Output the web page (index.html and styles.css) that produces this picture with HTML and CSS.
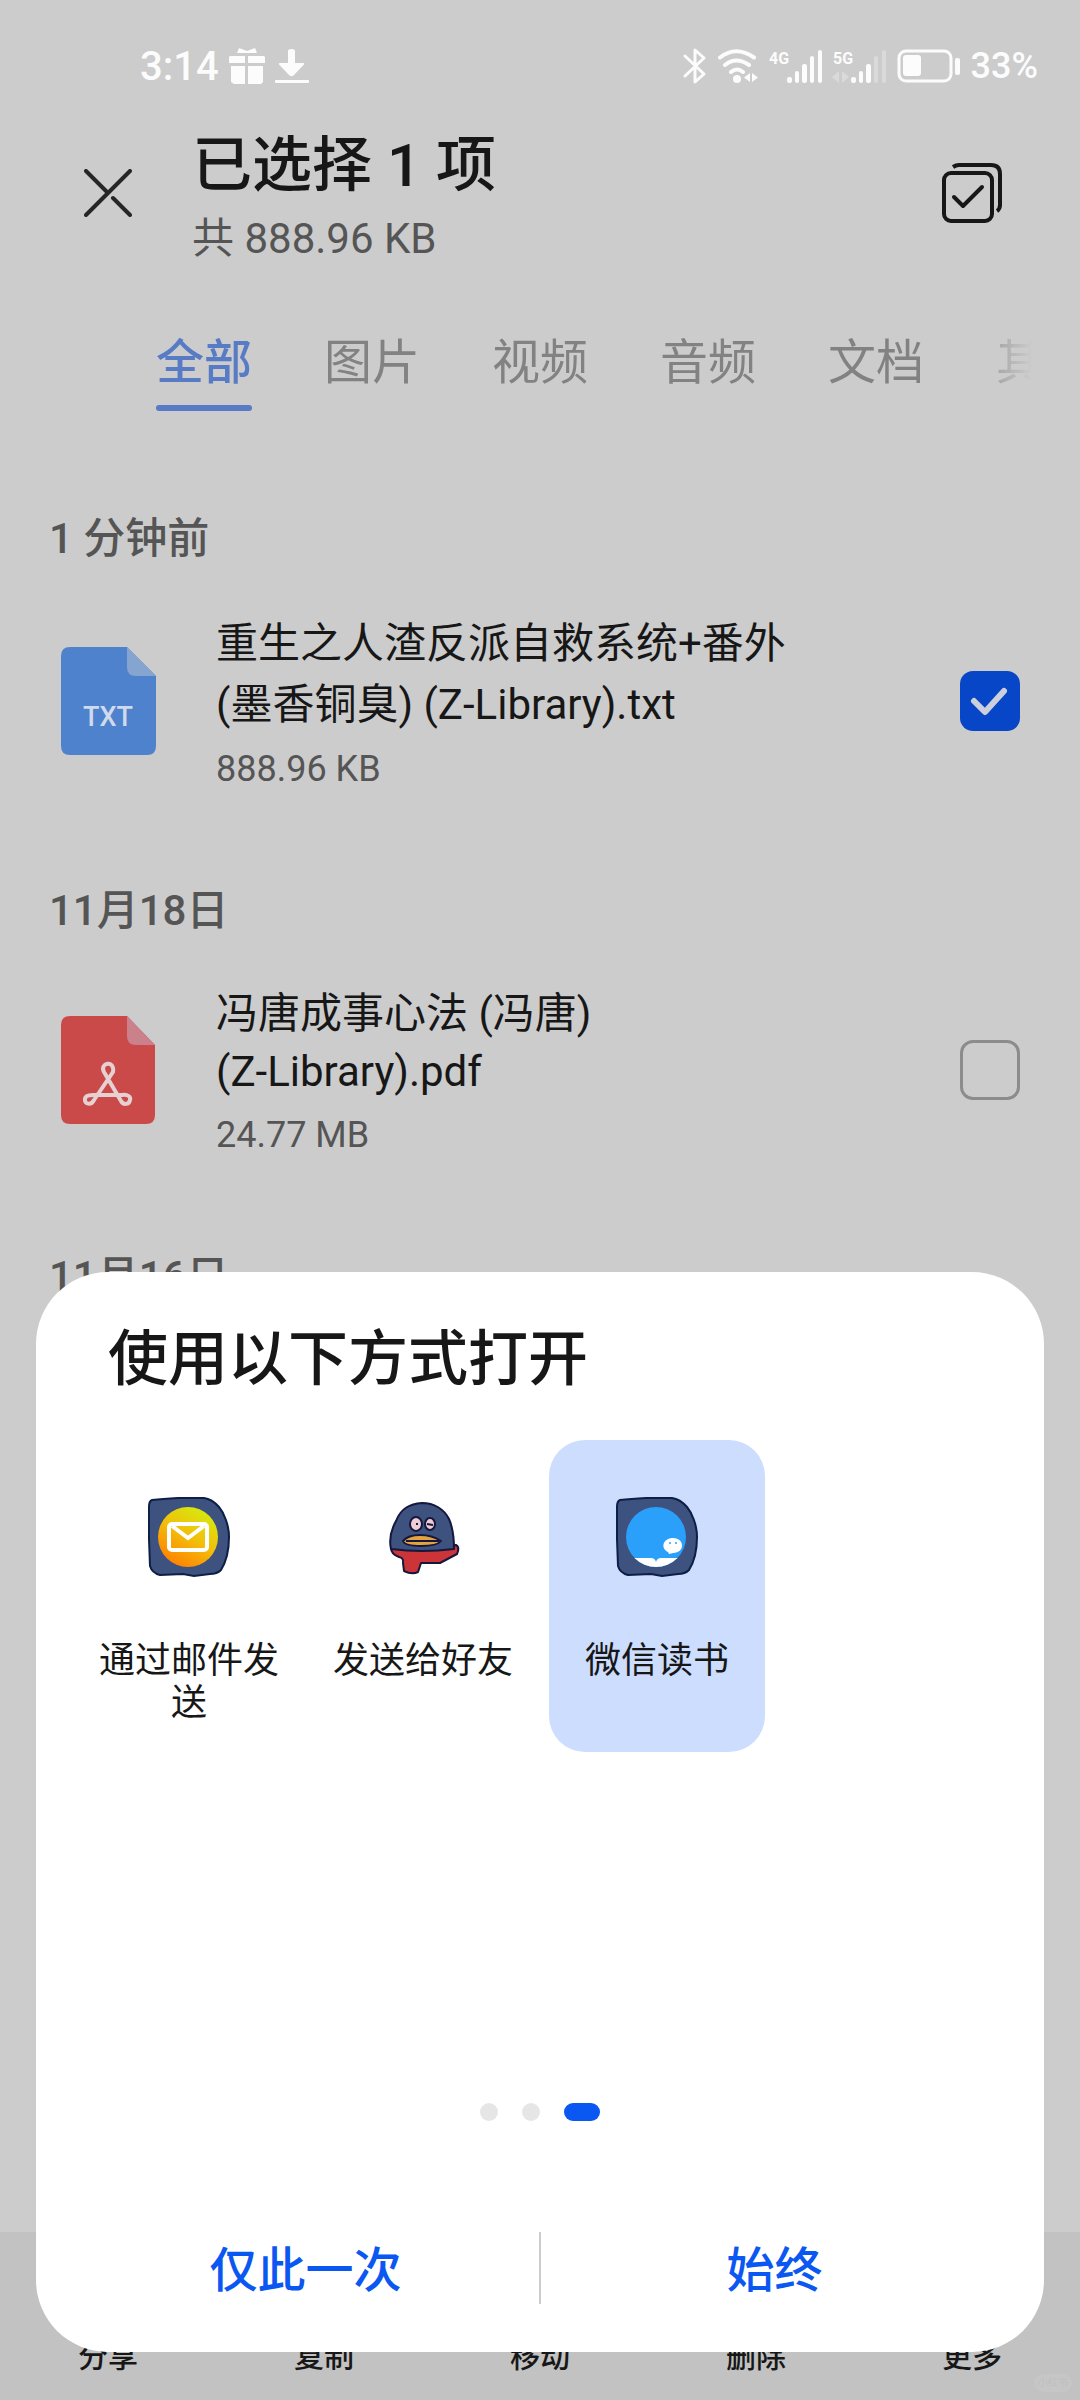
FILE: index.html
```html
<!DOCTYPE html>
<html lang="zh-CN">
  <head>
    <meta charset="UTF-8" />
    <meta name="viewport" content="width=device-width, initial-scale=1.0" />
    <title>文件管理</title>
    <link rel="stylesheet" href="styles.css">
  </head>
  <body>
    <div class="status-bar">
      <div class="status-left">
        <span class="clock">3:14</span>
        <svg class="gift" width="36" height="36" viewBox="0 0 36 36" fill="currentColor">
          <path d="M10 0l8 3 8-3 2 5H8z" />
          <path d="M1 8h15v7H0V9zM19 8h16l1 1v6H19zM2 18h14v18H5l-3-2zM19 18h15v16l-2 2H19z" />
        </svg>
        <svg width="34" height="36" viewBox="0 0 34 36" fill="currentColor">
          <path d="M13 3q0-2 3.500-2t3.500 2v12h8q2 0 .5 2L18.500 27.500q-2 1.500-4 0L4.500 17q-1.500-2 .5-2h8z" />
          <rect x="0" y="32" width="34" height="3" rx="1" />
        </svg>
      </div>

      <div class="status-right">
        <svg width="24" height="36" viewBox="0 0 24 36" fill="none" stroke="currentColor" stroke-width="3" stroke-linejoin="round" stroke-linecap="round">
          <path d="M2 8l19 18-9 8V2l9 8L2 28" />
        </svg>
        <svg width="42" height="36" viewBox="0 0 42 36" fill="none" stroke="currentColor" stroke-width="4" stroke-linecap="round">
          <path d="M3 9.500q16-12.500 34 0M8 17q11-9 24 0M14 24q6-5 12 0" />
          <circle cx="20" cy="31" r="4" fill="currentColor" stroke="none" />
          <path d="M33 25v9l-6-4.500zM35 25v9l6-4.500z" fill="currentColor" stroke="none" />
        </svg>
        <svg class="signal" width="54" height="36" viewBox="0 0 54 36" fill="currentColor">
          <text x="0" y="16">4G</text>
          <rect x="18" y="29" width="5" height="6" rx="2" />
          <rect x="26" y="23" width="4" height="12" rx="2" />
          <rect x="33" y="16" width="5" height="19" rx="2" />
          <rect x="41" y="8" width="4" height="27" rx="2" />
          <rect x="49" y="2" width="4" height="33" rx="2" />
        </svg>
        <svg class="signal" width="54" height="36" viewBox="0 0 54 36" fill="currentColor">
          <text x="0" y="16">5G</text>
          <path d="M6 23v12l-7-6zM9 23v12l7-6z" opacity=".3" />
          <rect x="18" y="29" width="5" height="6" rx="2" />
          <rect x="26" y="23" width="4" height="12" rx="2" />
          <rect x="33" y="16" width="5" height="19" rx="2" />
          <rect x="41" y="8" width="4" height="27" rx="2" opacity=".3" />
          <rect x="49" y="2" width="4" height="33" rx="2" opacity=".3" />
        </svg>
        <svg class="battery" width="64" height="36" viewBox="0 0 64 36" fill="currentColor">
          <rect x="2" y="3" width="52" height="30" rx="7" fill="none" stroke="currentColor" stroke-width="3" />
          <rect x="6" y="7" width="18" height="21" rx="3" />
          <rect x="58" y="10" width="5" height="17" rx="2" />
        </svg>
        <span class="battery-level">33%</span>
      </div>
    </div>

    <header class="header">
      <button class="icon-button" aria-label="关闭">
        <svg width="48" height="48" viewBox="0 0 48 48" fill="none" stroke="#262626" stroke-width="4" stroke-linecap="round">
          <path d="M2 46L46 2M2 2l21 21M29 29l17 17" />
        </svg>
      </button>
      <div class="header-text">
        <h1>已选择 1 项</h1>
        <p>共 888.96 KB</p>
      </div>
      <button class="icon-button" aria-label="全选">
        <svg width="60" height="60" viewBox="0 0 60 60" fill="none" stroke="#171717" stroke-width="4">
          <rect x="2" y="10" width="48" height="48" rx="7" />
          <path d="M11 4q3-2 6-2h32q9 0 9 9v31q0 4-3 6" />
          <path d="M12 34l9 9 19-19" stroke-linecap="round" stroke-linejoin="round" />
        </svg>
      </button>
    </header>

    <nav class="tabs">
      <a href="#" class="active">全部</a>
      <a href="#">图片</a>
      <a href="#">视频</a>
      <a href="#">音频</a>
      <a href="#">文档</a>
      <a href="#">其他</a>
    </nav>

    <main class="file-list">
      <h2>1 分钟前</h2>
      <div class="file">
        <svg class="file-icon" width="96" height="108" viewBox="0 0 96 108">
          <path d="M10 0h57l29 29v70q0 9-9 9H10q-9 0-9-9V9q0-9 9-9z" fill="#4f82cc" />
          <path d="M67 0l29 29H76q-9 0-9-9z" fill="#85a5d0" />
          <text x="48" y="79" text-anchor="middle">TXT</text>
        </svg>
        <div class="file-info">
          <label for="file1" class="file-name">重生之人渣反派自救系统+番外<br>(墨香铜臭) (Z-Library).txt</label>
          <p>888.96 KB</p>
        </div>
        <div class="check">
          <input type="checkbox" id="file1" checked>
          <svg width="60" height="60" viewBox="0 0 60 60" fill="none" stroke="#ccd0dc" stroke-width="6" stroke-linecap="round" stroke-linejoin="round">
            <path d="M14 30l11 11 19-21" />
          </svg>
        </div>
      </div>

      <h2>11月18日</h2>
      <div class="file">
        <svg class="file-icon" width="96" height="108" viewBox="0 0 96 108">
          <path d="M10 0h57l28 29v70q0 9-9 9H10q-9 0-9-9V9q0-9 9-9z" fill="#ca4a49" />
          <path d="M67 0l28 29H76q-9 0-9-9z" fill="#ca818c" />
          <g fill="none" stroke="#e6d0d2" stroke-width="4" stroke-linejoin="round">
            <path d="M33 79h29c6-1 9 2 8 5-1 5-7 5-9 1L44 56c-5-9 11-13 9 0L34 84c-3 6-10 4-9-1 0-3 3-4 8-4z" />
          </g>
        </svg>
        <div class="file-info">
          <label for="file2" class="file-name short">冯唐成事心法 (冯唐)<br>(Z-Library).pdf</label>
          <p>24.77 MB</p>
        </div>
        <div class="check">
          <input type="checkbox" id="file2">
        </div>
      </div>

      <h2>11月16日</h2>
    </main>

    <div class="toolbar">
      <button>分享</button>
      <button>复制</button>
      <button>移动</button>
      <button>删除</button>
      <button>更多</button>
      <span class="watermark">小红书</span>
    </div>

    <section class="sheet" role="dialog" aria-labelledby="sheetTitle">
      <h2 id="sheetTitle">使用以下方式打开</h2>
      <div class="apps">
        <button class="app">
          <svg width="84" height="84" viewBox="0 0 84 84">
            <defs>
              <linearGradient id="mail" x1=".2" y1="1" x2=".8" y2="0">
                <stop offset="0" stop-color="#ff7a00" />
                <stop offset=".5" stop-color="#f3bd09" />
                <stop offset="1" stop-color="#d2ee10" />
              </linearGradient>
            </defs>
            <path d="M5 4q10-1 26-2h26q8 1 15 9c5 6 10 18 10 30s-3 25-8 33q-4 4-11 4l-16 2-11-2-23 1q-8-2-10-9L2 43V11q0-6 3-7z" fill="#3d527f" stroke="#0e1f45" stroke-width="2" />
            <circle cx="41" cy="41" r="30" fill="url(#mail)" />
            <rect x="22" y="28" width="38" height="26" rx="3" fill="none" stroke="#fff" stroke-width="4" />
            <path d="M25 30l16 12 16-12" fill="none" stroke="#fff" stroke-width="4" />
          </svg>
          <span>通过邮件发送</span>
        </button>
        <button class="app">
          <svg width="84" height="84" viewBox="0 0 84 84">
            <g stroke="#15173c" stroke-width="2" stroke-linejoin="round">
              <path d="M10 52q0 6 8 9 5 1 4 6l1 8q8 4 14 1l3-9h19l17-9q3-7-1-9z" fill="#cc3438" />
              <path d="M10 53C8 44 10 34 15 25 20 12 29 8 41 7c12 0 22 6 27 16 4 9 5 19 5 30q-32 4-63 0z" fill="#3d527f" />
              <ellipse cx="35" cy="28" rx="6" ry="7" fill="#edccd6" />
              <ellipse cx="49" cy="28" rx="5" ry="6" fill="#edccd6" />
              <path d="M22 45q5-6 17-6t21 6q-4 5-20 5t-18-5z" fill="#e5a33f" />
              <path d="M25 45h33M46 28l6 1M36 27v2" fill="none" />
            </g>
          </svg>
          <span>发送给好友</span>
        </button>
        <button class="app selected">
          <svg width="84" height="84" viewBox="0 0 84 84">
            <defs>
              <clipPath id="disc"><circle cx="41" cy="41" r="30" /></clipPath>
            </defs>
            <path d="M5 4q10-1 26-2h26q8 1 15 9c5 6 10 18 10 30s-3 25-8 33q-4 4-11 4l-16 2-11-2-23 1q-8-2-10-9L2 43V11q0-6 3-7z" fill="#3d527f" stroke="#0e1f45" stroke-width="2" />
            <circle cx="41" cy="41" r="30" fill="#2ba0fb" />
            <path d="M10 62h26q4 0 5 4 1-4 5-4h26v12H10z" fill="#fff" clip-path="url(#disc)" />
            <path d="M58 42c12 0 12 15 0 15l-4 1-1-2c-8-4-5-14 5-14z" fill="#fff" />
            <circle cx="55" cy="47" r="1" fill="#2ba0fb" />
            <circle cx="61" cy="47" r="1" fill="#2ba0fb" />
          </svg>
          <span>微信读书</span>
        </button>
      </div>
      <div class="dots">
        <span></span>
        <span></span>
        <span class="current"></span>
      </div>
      <div class="actions">
        <button>仅此一次</button>
        <button>始终</button>
      </div>
    </section>
  </body>
</html>
```
FILE: styles.css
```css
:root {
  --page: #ccc;
  --bar: #c2c2c2;
  --text: #171717;
  --text-secondary: #555;
  --text-muted: #828282;
  --accent: #0b57f2;
  --highlight: #cdddfe;
}

* {
  margin: 0;
  padding: 0;
  box-sizing: border-box;
}

body {
  display: flex;
  flex-direction: column;
  min-height: 100vh;
  font-family: Roboto, "Noto Sans CJK SC", sans-serif;
  font-size: 42px;
  color: var(--text);
  background: var(--page);
}

button {
  font: inherit;
  color: inherit;
  background: none;
  border: none;
}

h1,
h2 {
  font-weight: 500;
}

svg {
  display: block;
  flex: none;
}

/* Status bar */
.status-bar {
  display: flex;
  justify-content: space-between;
  height: 114px;
  padding: 18px 42px 0 140px;
  color: #fcfcfc;
}

.status-left,
.status-right {
  display: flex;
  align-items: center;
  gap: 10px;
}

.clock {
  font-size: 40px;
  font-weight: 500;
}

.battery-level {
  font-size: 36px;
  font-weight: 500;
}

.signal {
  overflow: visible;
}

.signal text {
  font-size: 16px;
  font-weight: 700;
}

/* Header */
.header {
  display: flex;
  align-items: center;
  gap: 60px;
  padding: 0 78px 0 84px;
}

.header-text {
  flex: 1;
  padding-top: 12px;
}

.header h1 {
  font-size: 60px;
  line-height: 80px;
}

.header p {
  line-height: 66px;
  color: var(--text-secondary);
}

/* Category tabs */
.tabs {
  display: flex;
  gap: 72px;
  margin-right: 48px;
  padding: 55px 0 0 156px;
  overflow: hidden;
  -webkit-mask-image: linear-gradient(to left, transparent, #000 72px);
  mask-image: linear-gradient(to left, transparent, #000 72px);
}

.tabs a {
  flex: none;
  padding-bottom: 12px;
  font-size: 48px;
  line-height: 72px;
  color: var(--text-muted);
  text-decoration: none;
}

.tabs .active {
  position: relative;
  font-weight: 500;
  color: #577bc4;
}

.tabs .active::after {
  content: "";
  position: absolute;
  left: 0;
  bottom: 0;
  width: 100%;
  height: 6px;
  border-radius: 3px;
  background: #577bc4;
}

/* File list */
.file-list {
  flex: 1;
  padding-top: 98px;
}

.file-list h2 {
  padding-left: 49px;
  font-size: 42px;
  line-height: 60px;
  color: var(--text-secondary);
}

.file {
  display: flex;
  align-items: center;
  gap: 60px;
  margin-bottom: 48px;
  padding: 0 60px;
}

.file-icon text {
  font-size: 27px;
  font-weight: 500;
  fill: #cfdaec;
}

.file-info {
  flex: 1;
  padding: 44px 0 40px;
}

.file-name {
  display: block;
  line-height: 61px;
}

.file-name.short {
  line-height: 58px;
}

.file-info p {
  margin-top: 10px;
  font-size: 36px;
  line-height: 48px;
  color: var(--text-secondary);
}

.check {
  display: grid;
}

.check > * {
  grid-area: 1 / 1;
}

.check input {
  appearance: none;
  width: 60px;
  height: 60px;
  border: 3px solid #8c8c8c;
  border-radius: 13px;
}

.check input:checked {
  border: none;
  background: #0746c7;
}

.check svg {
  pointer-events: none;
}

/* Bottom toolbar */
.toolbar {
  position: relative;
  display: grid;
  grid-template-columns: repeat(5, 1fr);
  align-items: end;
  height: 168px;
  padding-bottom: 22px;
  background: var(--bar);
}

.toolbar button {
  font-size: 30px;
  font-weight: 500;
  line-height: 42px;
}

.watermark {
  position: absolute;
  right: 8px;
  bottom: 8px;
  padding: 0 4px;
  border-radius: 9px;
  font-size: 10px;
  line-height: 18px;
  color: #bfbfbf;
  background: #c6c6c6;
}

/* Open with */
.sheet {
  position: fixed;
  left: 36px;
  right: 36px;
  bottom: 48px;
  padding: 48px 0;
  border-radius: 72px;
  background: #fff;
}

.sheet h2 {
  padding: 0 72px;
  font-size: 60px;
  line-height: 80px;
}

.apps {
  display: grid;
  grid-template-columns: repeat(4, 1fr);
  gap: 18px;
  min-height: 624px;
  margin: 40px 45px 0;
  align-content: start;
}

.app {
  display: flex;
  flex-direction: column;
  align-items: center;
  height: 312px;
  padding: 56px 16px 0;
  border-radius: 36px;
}

.app.selected {
  background: var(--highlight);
}

.app span {
  margin-top: 60px;
  font-size: 36px;
  line-height: 42px;
}

.dots {
  display: flex;
  justify-content: center;
  gap: 24px;
  margin-top: 39px;
}

.dots span {
  width: 18px;
  height: 18px;
  border-radius: 9px;
  background: #e6e6e6;
}

.dots .current {
  width: 36px;
  background: var(--accent);
}

.actions {
  display: flex;
  margin: 111px 36px 0;
}

.actions button {
  flex: 1;
  padding-top: 6px;
  font-size: 48px;
  font-weight: 500;
  line-height: 66px;
  color: var(--accent);
}

.actions button + button {
  border-left: 2px solid #ccc;
}
```
